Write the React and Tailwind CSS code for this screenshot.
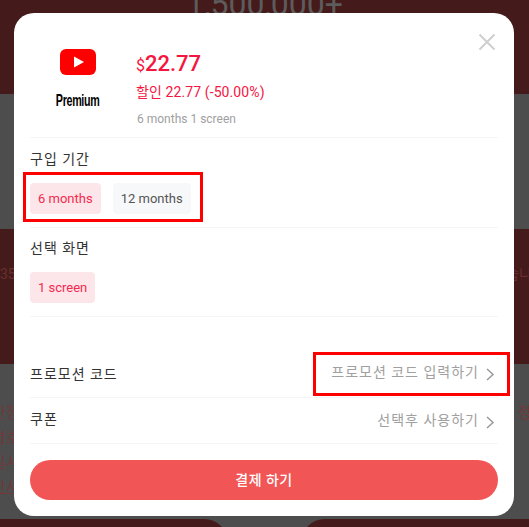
import React from "react";

const font = "[font-family:Roboto,'Noto_Sans_CJK_KR',sans-serif]";

function Chevron() {
  return (
    <svg width="9" height="13" viewBox="0 0 9 13" className="ml-[7px] mr-[3px] mt-[6px] shrink-0" fill="none" stroke="#999999" strokeWidth="1.5">
      <path d="M1 1l6 5.5L1 12" />
    </svg>
  );
}

function Backdrop() {
  return (
    <div className="h-[527px] w-[529px] overflow-hidden flex flex-col bg-[#4d4d4d] text-[#5c5c5c]">
      <div className="h-[94px] bg-[#451a1a] shrink-0 flex justify-center">
        <span className="text-[32px] leading-none -mt-[12px] whitespace-nowrap">1,500,000+</span>
      </div>
      <div className="h-[135px] shrink-0" />
      <div className="h-[135px] bg-[#451a1a] shrink-0 flex justify-between items-start pt-[35px] text-[14px] leading-[20px] text-[#693030]">
        <span>35</span>
        <span className="-mr-[3px]">습니</span>
      </div>
      <div className="h-[155px] shrink-0 text-[15px] leading-[24.5px] text-[#6f3a3a] pt-[37px] overflow-hidden">
        <div className="flex justify-between -ml-[8px]">
          <span>안정</span>
          <span className="-mr-[16px]">정으</span>
        </div>
        <div className="-ml-[8px]">명호</div>
        <div className="-ml-[8px]">일시</div>
        <div className="-ml-[8px] underline">안서</div>
      </div>
      <div className="flex-1 flex justify-between">
        <div className="w-[228px] bg-[#451a1a] rounded-tr-[24px] h-[30px]" />
        <div className="w-[228px] bg-[#451a1a] rounded-tl-[24px] h-[30px]" />
      </div>
    </div>
  );
}

export default function App() {
  return (
    <div className={`relative h-[527px] w-[529px] overflow-hidden ${font}`}>
      <Backdrop />
      <div className="absolute left-[14px] top-[13px] h-[503px] w-[500px] rounded-[20px] bg-white px-[16px] text-[14px] text-[#333]">
        <button className="absolute right-[18px] top-[20px]" aria-label="close">
          <svg width="18" height="18" viewBox="0 0 18 18" fill="none" stroke="#cfcfcf" strokeWidth="2">
            <path d="M1.5 1.5l15 15M16.5 1.5l-15 15" />
          </svg>
        </button>

        <div className="flex h-[125px] border-b border-[#f5f5f5] pl-[7px]">
          <div className="w-[82px] flex flex-col items-center pt-[36px] shrink-0">
            <svg width="36" height="26" viewBox="0 0 36 26">
              <rect width="36" height="26" rx="6" fill="#ff0000" />
              <path d="M14 7.5l10 5.5-10 5.5z" fill="#fff" />
            </svg>
            <span className="mt-[16px] text-[17px] leading-[20px] font-bold text-black tracking-[-0.5px] scale-x-[.63] [font-family:'Liberation_Sans',sans-serif]">Premium</span>
          </div>
          <div className="ml-[17px] pt-[37px] text-[#f5153f]">
            <div className="flex items-baseline leading-[28px]">
              <span className="text-[16px]">$</span>
              <span className="text-[22px] font-medium">22.77</span>
            </div>
            <div className="mt-[2px] text-[14px] leading-[20px] tracking-[0.1px]">할인 22.77 (-50.00%)</div>
            <div className="mt-[9px] ml-[1px] text-[12px] leading-[16px] text-[#a0a0a0]">6 months 1 screen</div>
          </div>
        </div>

        <div className="h-[90px] border-b border-[#f5f5f5] pt-[11px]">
          <div className="leading-[20px] tracking-[1px]">구입 기간</div>
          <div className="relative mt-[14px] flex gap-[12px] text-[13px]">
            <div className="absolute -left-[7px] -top-[11px] h-[50px] w-[180px] border-[3px] border-[#ff0000]" />
            <span className="h-[31px] leading-[31px] px-[8px] rounded-[4px] bg-[#fde6e9] text-[#f5294f]">6 months</span>
            <span className="h-[31px] leading-[31px] px-[8px] rounded-[4px] bg-[#f7f8fa] text-[#555]">12 months</span>
          </div>
        </div>

        <div className="h-[89px] border-b border-[#f5f5f5] pt-[10px]">
          <div className="leading-[20px] tracking-[1px]">선택 화면</div>
          <div className="mt-[14px] flex text-[13px]">
            <span className="h-[31px] leading-[31px] px-[8px] rounded-[4px] bg-[#fde6e9] text-[#f5294f]">1 screen</span>
          </div>
        </div>

        <div className="relative mt-[34px] flex h-[47px] justify-between border-b border-[#f5f5f5] pt-[13px]">
          <span className="leading-[20px] tracking-[1px]">프로모션 코드</span>
          <div className="-mt-[2px] flex items-start text-[#a0a0a0] leading-[20px] tracking-[1px]">
            프로모션 코드 입력하기
            <Chevron />
          </div>
          <div className="absolute -right-[12px] top-[1px] h-[44px] w-[197px] border-[3px] border-[#ff0000]" />
        </div>

        <div className="flex h-[46px] justify-between border-b border-[#f5f5f5] pt-[11px]">
          <span className="leading-[20px] tracking-[1px]">쿠폰</span>
          <div className="mt-[1px] flex items-start text-[#a0a0a0] leading-[20px] tracking-[1px]">
            선택후 사용하기
            <Chevron />
          </div>
        </div>

        <button className="mt-[16px] h-[40px] w-full rounded-full bg-[#f15555] text-[14px] font-medium text-white tracking-[0.5px]">결제 하기</button>
      </div>
    </div>
  );
}
